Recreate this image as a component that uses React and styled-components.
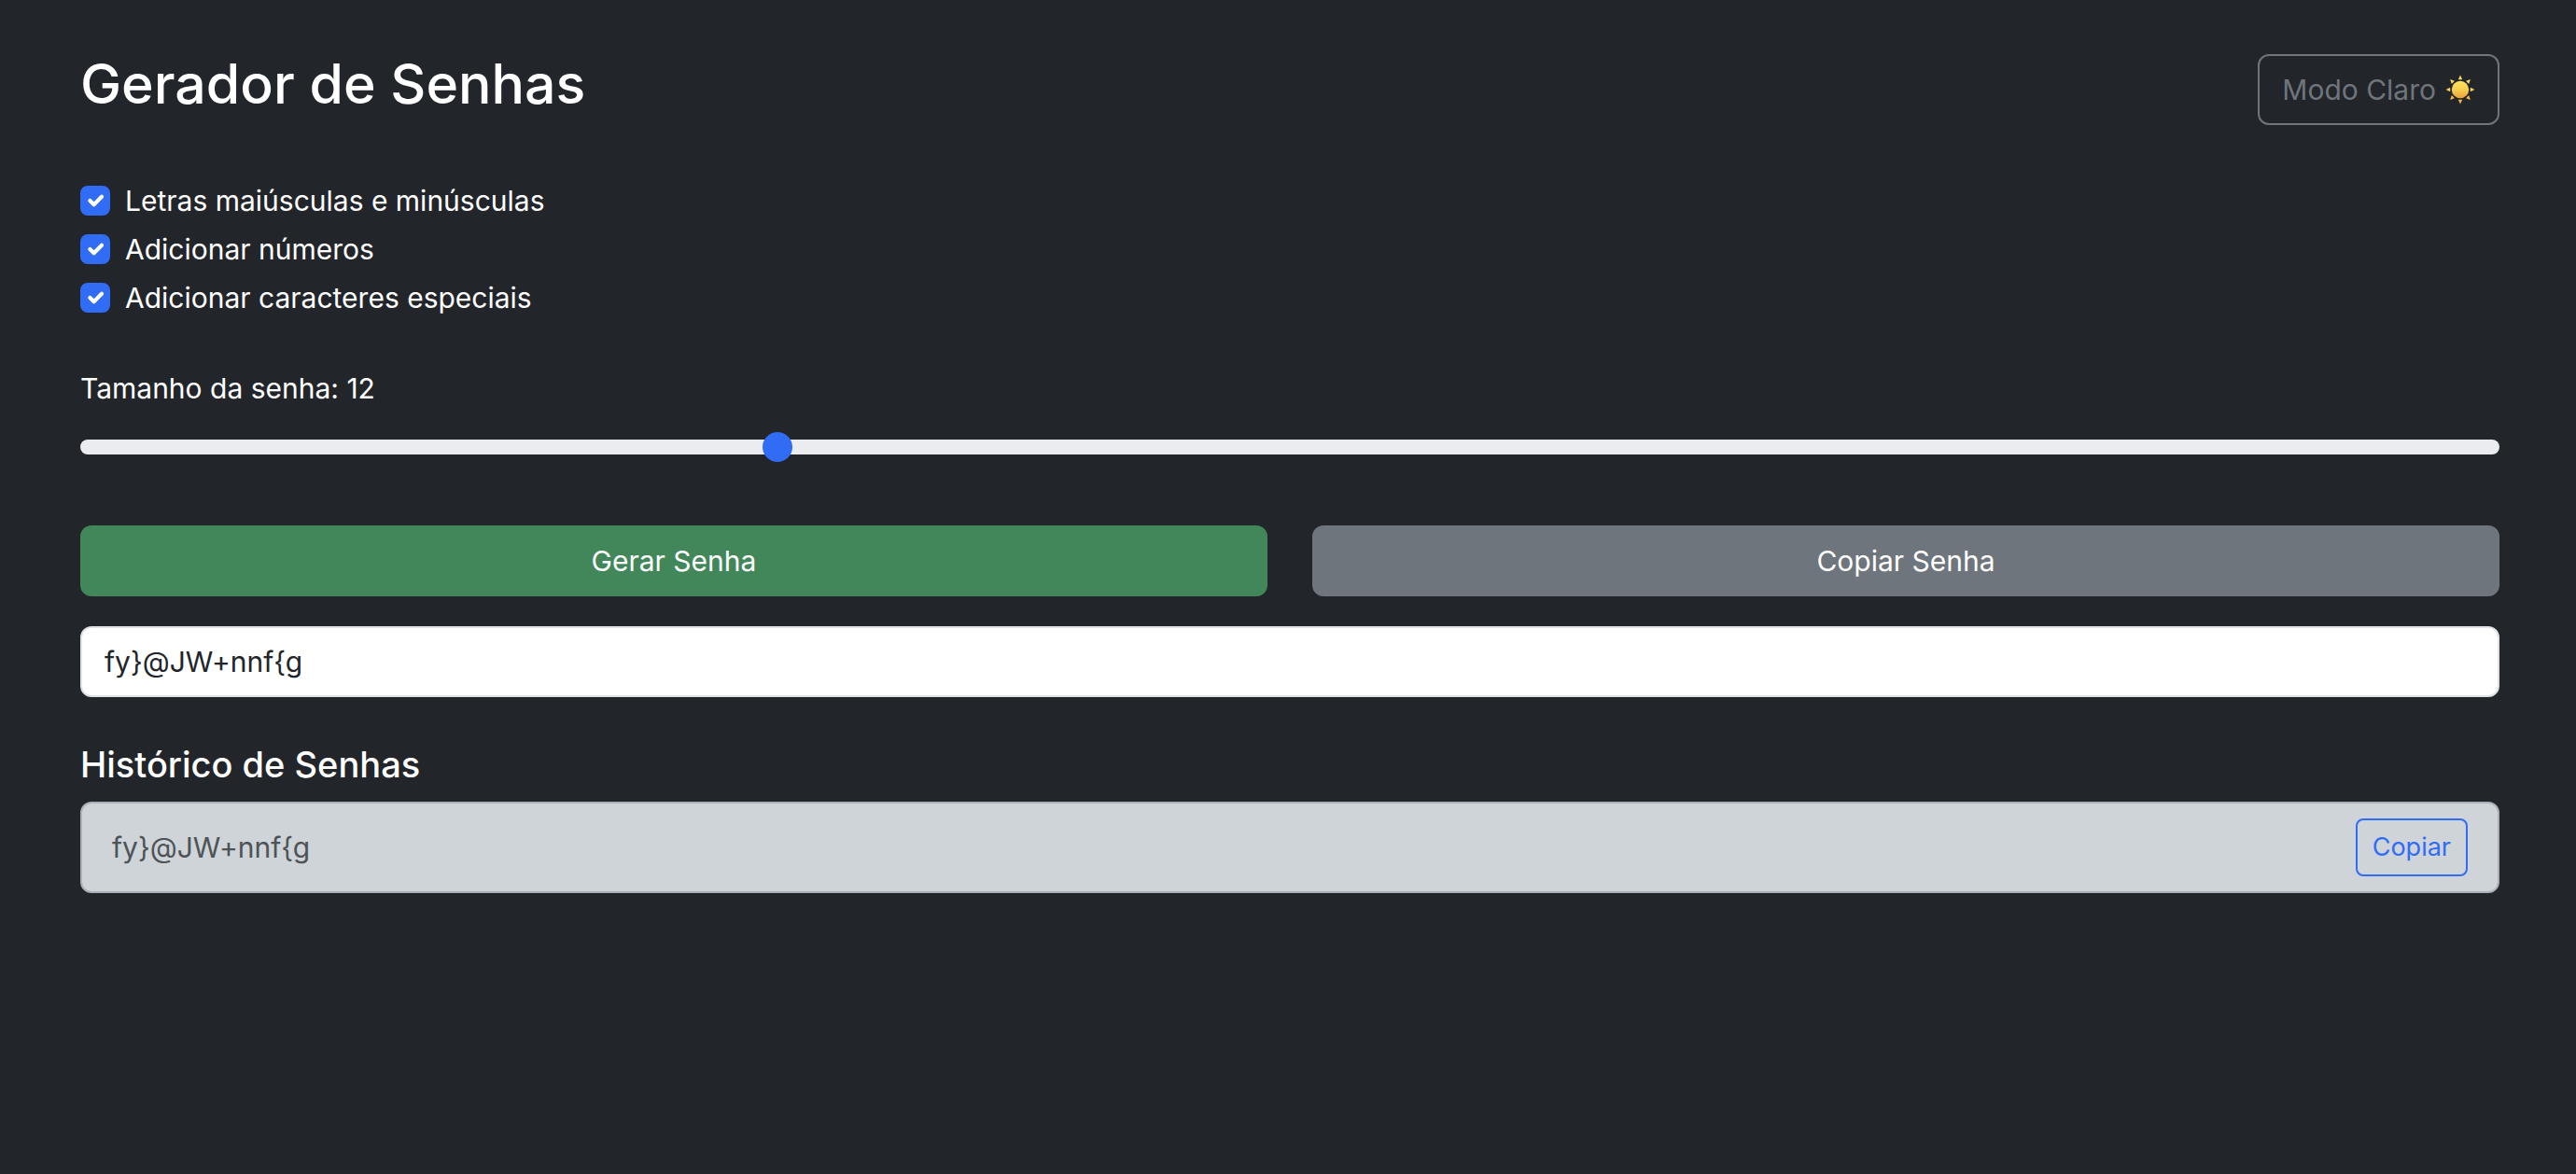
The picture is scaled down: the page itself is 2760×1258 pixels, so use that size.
import React, { useState } from "react";
import styled, { createGlobalStyle } from "styled-components";

const GlobalStyle = createGlobalStyle`
  *, *::before, *::after { box-sizing: border-box; }
  body {
    margin: 0;
    background: #22252a;
    color: #fff;
    font-family: Inter, Roboto, "Liberation Sans", sans-serif;
    font-size: 30px;
    line-height: 48px;
  }
  button, input { font: inherit; }
`;

const Page = styled.main`
  padding: 50px 82px 50px 86px;
`;

const Header = styled.header`
  display: flex;
  justify-content: space-between;
  align-items: center;
  margin-bottom: 49px;
`;

const Title = styled.h1`
  margin: 2px 0 14px;
  font-size: 59px;
  font-weight: 500;
  line-height: 76px;
`;

const Button = styled.button`
  display: flex;
  align-items: center;
  justify-content: center;
  gap: 10px;
  padding: 12px 24px;
  color: ${(p) => p.$color || "#fff"};
  background: ${(p) => p.$fill || "transparent"};
  border: 2px solid ${(p) => p.$fill || p.$color};
  border-radius: 12px;
  cursor: pointer;
`;

const SmallButton = styled(Button)`
  padding: 8px 16px;
  font-size: 27px;
  line-height: 42px;
  border-radius: 8px;
`;

const SunIcon = styled.svg`
  width: 32px;
  height: 32px;
`;

const Options = styled.div`
  display: grid;
  gap: 4px;
  margin-bottom: 49px;
`;

const Option = styled.label`
  display: flex;
  align-items: center;
  gap: 16px;
`;

const Checkbox = styled.input`
  appearance: none;
  width: 32px;
  height: 32px;
  margin: 0;
  border: 2px solid #dee2e6;
  border-radius: 8px;
  background: #fff;

  &:checked {
    border-color: #316cf4;
    background: #316cf4 center / 28px no-repeat
      url("data:image/svg+xml,%3csvg xmlns='http://www.w3.org/2000/svg' viewBox='0 0 20 20'%3e%3cpath fill='none' stroke='%23fff' stroke-linecap='round' stroke-linejoin='round' stroke-width='3' d='m6 10 3 3 6-6'/%3e%3c/svg%3e");
  }
`;

const LengthField = styled.div`
  display: grid;
  gap: 15px;
  margin-bottom: 60px;
`;

const Range = styled.input`
  appearance: none;
  width: 100%;
  height: 48px;
  margin: 0;
  background: transparent;

  &::-webkit-slider-runnable-track {
    height: 16px;
    border-radius: 8px;
    background: #ebecf0;
  }
  &::-webkit-slider-thumb {
    appearance: none;
    width: 32px;
    height: 32px;
    margin-top: -8px;
    border-radius: 50%;
    background: #316cf4;
  }
`;

const Actions = styled.div`
  display: grid;
  grid-template-columns: 1fr 1fr;
  gap: 48px;
  margin-bottom: 32px;
`;

const PasswordInput = styled.input`
  display: block;
  width: 100%;
  height: 76px;
  padding: 12px 24px;
  color: #22252a;
  background: #fff;
  border: 2px solid #dfe2e6;
  border-radius: 12px;
  outline: none;
`;

const Subtitle = styled.h2`
  margin: 48px 0 16px;
  font-size: 38px;
  font-weight: 500;
  line-height: 48px;
`;

const History = styled.ul`
  margin: 0;
  padding: 0;
  list-style: none;
  border: 2px solid #abb1ba;
  border-radius: 12px;
  background: #cfd4d8;
`;

const HistoryItem = styled.li`
  display: flex;
  align-items: center;
  justify-content: space-between;
  padding: 16px 32px;
  color: #4d5357;
`;

const RAYS = [0, 45, 90, 135, 180, 225, 270, 315];

function Sun() {
  return (
    <SunIcon viewBox="0 0 32 32" aria-hidden="true">
      <defs>
        <linearGradient id="sun" x1="0" y1="0" x2="0" y2="1">
          <stop offset="0" stopColor="#fbe45f" />
          <stop offset="0.5" stopColor="#f8cf50" />
          <stop offset="1" stopColor="#e9a03a" />
        </linearGradient>
      </defs>
      {RAYS.map((angle) => (
        <path
          key={angle}
          d="M16 0.6L18.2 5.2H13.8Z"
          fill={angle > 90 && angle < 270 ? "#f0b548" : "#f7d763"}
          transform={`rotate(${angle} 16 16)`}
        />
      ))}
      <circle cx="16" cy="16" r="9.2" fill="url(#sun)" />
    </SunIcon>
  );
}

const OPTIONS = [
  { id: "letters", label: "Letras maiúsculas e minúsculas" },
  { id: "numbers", label: "Adicionar números" },
  { id: "symbols", label: "Adicionar caracteres especiais" },
];

export default function App() {
  const [length, setLength] = useState(12);
  const password = "fy}@JW+nnf{g";

  return (
    <>
      <GlobalStyle />
      <Page>
        <Header>
          <Title>Gerador de Senhas</Title>
          <Button type="button" $color="#6e757c">
            Modo Claro <Sun />
          </Button>
        </Header>
        <Options>
          {OPTIONS.map(({ id, label }) => (
            <Option key={id} htmlFor={id}>
              <Checkbox type="checkbox" id={id} defaultChecked />
              {label}
            </Option>
          ))}
        </Options>
        <LengthField>
          <label htmlFor="length">Tamanho da senha: {length}</label>
          <Range
            type="range"
            id="length"
            min="4"
            max="32"
            value={length}
            onChange={(e) => setLength(Number(e.target.value))}
          />
        </LengthField>
        <Actions>
          <Button type="button" $fill="#418759">Gerar Senha</Button>
          <Button type="button" $fill="#6e757c">Copiar Senha</Button>
        </Actions>
        <PasswordInput type="text" aria-label="Senha" readOnly value={password} />
        <Subtitle>Histórico de Senhas</Subtitle>
        <History>
          <HistoryItem>
            {password}
            <SmallButton type="button" $color="#316cf4">Copiar</SmallButton>
          </HistoryItem>
        </History>
      </Page>
    </>
  );
}
